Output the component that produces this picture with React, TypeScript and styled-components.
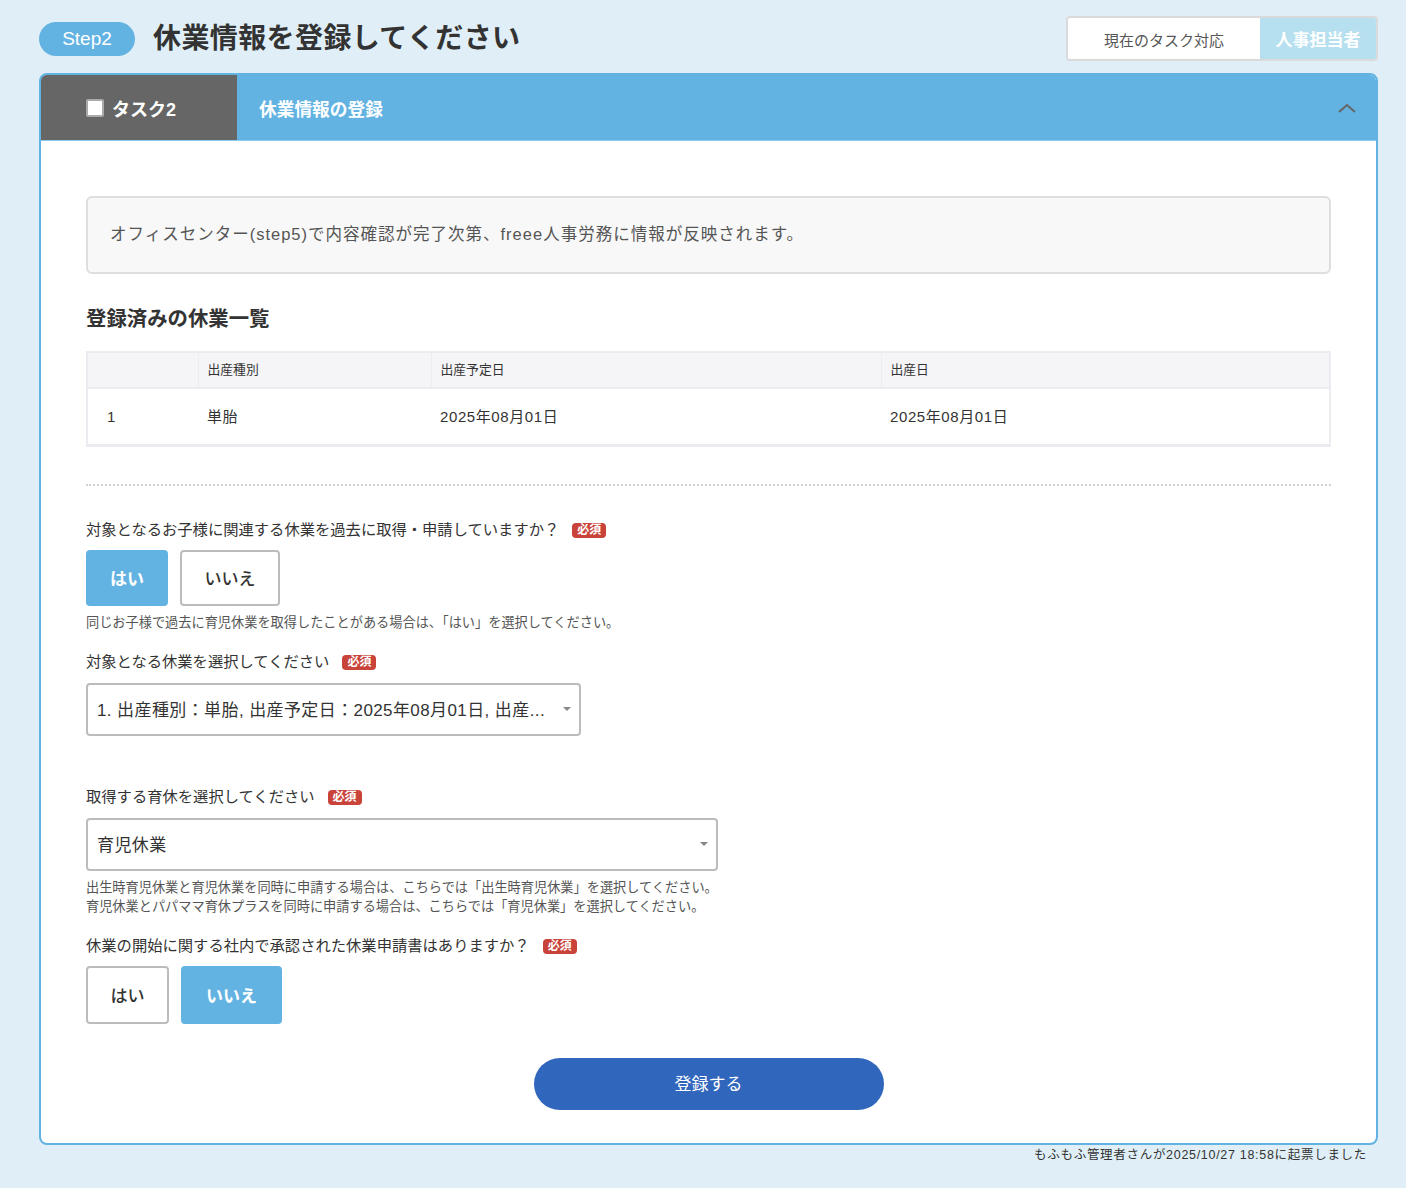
import styled, { createGlobalStyle } from "styled-components";

const GlobalStyle = createGlobalStyle`
  body {
    margin: 0;
    background: #e0eff7;
    font-family: "Liberation Sans", "Noto Sans CJK JP", sans-serif;
    color: #333;
  }
`;

const Page = styled.div`
  padding: 16px 28px 30px 39px;
`;

const TopBar = styled.header`
  height: 45px;
  display: flex;
  align-items: center;
  justify-content: space-between;
`;

const TitleGroup = styled.div`
  display: flex;
  align-items: center;
  gap: 18px;
  margin-top: 1px;
`;

const StepPill = styled.span`
  width: 96px;
  height: 34px;
  border-radius: 17px;
  background: #63b3e2;
  color: #fff;
  font-size: 19px;
  display: flex;
  align-items: center;
  justify-content: center;
`;

const Title = styled.h1`
  margin: 0;
  font-size: 28px;
  font-weight: 700;
  line-height: 40px;
  color: #333;
  letter-spacing: 0.4px;
`;

const RoleBox = styled.div`
  display: flex;
  height: 41px;
  border: 2px solid #dadada;
  border-radius: 4px;
  overflow: hidden;
`;

const RoleLabel = styled.div`
  width: 192px;
  background: #fff;
  color: #555;
  font-size: 15px;
  display: flex;
  align-items: center;
  justify-content: center;
  padding-top: 2px;
`;

const RoleValue = styled.div`
  width: 116px;
  background: #b6dff0;
  color: #fff;
  font-size: 17px;
  font-weight: 700;
  display: flex;
  align-items: center;
  justify-content: center;
`;

const Card = styled.section`
  margin-top: 12px;
  border: 2px solid #63b3e2;
  border-radius: 8px;
  background: #fff;
  overflow: hidden;
`;

const CardHeader = styled.div`
  display: flex;
  height: 65px;
  background: #63b3e2;
  border-bottom: 1px solid #8ccaee;
`;

const TaskTab = styled.div`
  width: 151px;
  padding-left: 45px;
  background: #666;
  color: #fff;
  display: flex;
  align-items: center;
  gap: 8px;
  font-size: 18px;
  font-weight: 700;
`;

const CheckBox = styled.span`
  width: 14px;
  height: 14px;
  background: #fff;
  border: 2px solid #aaa;
  border-radius: 2px;
`;

const HeaderTitle = styled.div`
  flex: 1;
  display: flex;
  align-items: center;
  justify-content: space-between;
  padding: 0 20px 0 22px;
  color: #fff;
  font-size: 17.7px;
  font-weight: 700;
`;

const CardBody = styled.div`
  padding: 55px 45px 33px;
`;

const InfoBox = styled.div`
  height: 70px;
  box-sizing: content-box;
  border: 2px solid #dedede;
  border-radius: 6px;
  background: #f8f8f8;
  display: flex;
  align-items: center;
  padding: 0 0 4px 22px;
  font-size: 16.5px;
  letter-spacing: 1px;
  color: #555;
`;

const SectionHeading = styled.h2`
  margin: 31px 0 18px;
  font-size: 20.4px;
  line-height: 28px;
  font-weight: 700;
  color: #333;
`;

const Table = styled.table`
  width: 100%;
  table-layout: fixed;
  border-collapse: collapse;
  border: 2px solid #ebebf0;
  border-bottom-width: 3px;
`;

const Th = styled.th<{ $w?: number }>`
  box-sizing: border-box;
  width: ${(p) => (p.$w ? `${p.$w}px` : "auto")};
  height: 36px;
  background: #f5f4f6;
  text-align: left;
  font-size: 12.8px;
  line-height: 16px;
  font-weight: 400;
  color: #333;
  padding: 0 0 0 9px;
  border-left: 1px solid #ececf1;
  border-bottom: 2px solid #ebebf0;
  &:first-child {
    padding-left: 19px;
    border-left: none;
  }
`;

const Td = styled.td`
  height: 55px;
  font-size: 15px;
  line-height: 20px;
  letter-spacing: 0.6px;
  color: #333;
  padding: 0 0 0 9px;
  &:first-child {
    padding-left: 19px;
  }
`;

const Dotted = styled.hr`
  margin: 37px 0 0;
  border: none;
  border-top: 2px dotted #d2d2d2;
`;

const Field = styled.div<{ $top: number }>`
  margin-top: ${(p) => p.$top}px;
`;

const Label = styled.div`
  display: flex;
  align-items: center;
  gap: 13px;
  font-size: 15.3px;
  line-height: 22px;
  color: #333;
`;

const Required = styled.span`
  background: #c9433b;
  color: #fff;
  font-size: 12px;
  font-weight: 700;
  line-height: 15px;
  padding: 0 5px;
  border-radius: 4px;
`;

const ChoiceRow = styled.div<{ $h: number }>`
  display: flex;
  gap: 12px;
  margin-top: 9px;
  height: ${(p) => p.$h}px;
`;

const Choice = styled.button<{ $active?: boolean; $w: number }>`
  width: ${(p) => p.$w}px;
  height: 100%;
  border-radius: 4px;
  font-family: inherit;
  font-size: 17px;
  font-weight: ${(p) => (p.$active ? 700 : 500)};
  color: ${(p) => (p.$active ? "#fff" : "#333")};
  background: ${(p) => (p.$active ? "#63b3e2" : "#fff")};
  border: 2px solid ${(p) => (p.$active ? "#63b3e2" : "#bcbcbc")};
  padding: 0 0 2px;
  cursor: pointer;
`;

const Help = styled.p`
  margin: 7px 0 0;
  font-size: 13.2px;
  line-height: 19px;
  color: #555;
`;

const Select = styled.div<{ $w: number }>`
  margin-top: 10px;
  width: ${(p) => p.$w}px;
  height: 53px;
  box-sizing: border-box;
  border: 2px solid #bcbcbc;
  border-radius: 4px;
  display: flex;
  align-items: center;
  justify-content: space-between;
  padding: 0 8px 2px 9px;
  font-size: 17px;
  letter-spacing: 0.4px;
  color: #333;
`;

const Arrow = styled.span`
  width: 0;
  height: 0;
  border-left: 4px solid transparent;
  border-right: 4px solid transparent;
  border-top: 4px solid #888;
`;

const SubmitRow = styled.div`
  display: flex;
  justify-content: center;
  margin-top: 34px;
`;

const Submit = styled.button`
  width: 350px;
  height: 52px;
  border: none;
  border-radius: 26px;
  background: #3166bd;
  color: #fff;
  font-family: inherit;
  font-size: 17px;
  padding: 0 0 4px;
  cursor: pointer;
`;

const Footer = styled.div`
  text-align: right;
  padding-right: 11px;
  margin-top: 1px;
  font-size: 12.5px;
  line-height: 18px;
  letter-spacing: 0.7px;
  color: #333;
`;

export default function App() {
  return (
    <>
      <GlobalStyle />
      <Page>
        <TopBar>
          <TitleGroup>
            <StepPill>Step2</StepPill>
            <Title>休業情報を登録してください</Title>
          </TitleGroup>
          <RoleBox>
            <RoleLabel>現在のタスク対応</RoleLabel>
            <RoleValue>人事担当者</RoleValue>
          </RoleBox>
        </TopBar>

        <Card>
          <CardHeader>
            <TaskTab>
              <CheckBox />
              タスク2
            </TaskTab>
            <HeaderTitle>
              休業情報の登録
              <svg width="18" height="10" viewBox="0 0 18 10">
                <polyline points="1,9 9,2 17,9" fill="none" stroke="#666" strokeWidth="2" />
              </svg>
            </HeaderTitle>
          </CardHeader>

          <CardBody>
            <InfoBox>
              オフィスセンター(step5)で内容確認が完了次第、freee人事労務に情報が反映されます。
            </InfoBox>

            <SectionHeading>登録済みの休業一覧</SectionHeading>
            <Table>
              <thead>
                <tr>
                  <Th $w={111}></Th>
                  <Th $w={233}>出産種別</Th>
                  <Th $w={450}>出産予定日</Th>
                  <Th>出産日</Th>
                </tr>
              </thead>
              <tbody>
                <tr>
                  <Td>1</Td>
                  <Td>単胎</Td>
                  <Td>2025年08月01日</Td>
                  <Td>2025年08月01日</Td>
                </tr>
              </tbody>
            </Table>

            <Dotted />

            <Field $top={33}>
              <Label>
                対象となるお子様に関連する休業を過去に取得・申請していますか？
                <Required>必須</Required>
              </Label>
              <ChoiceRow $h={56}>
                <Choice $active $w={82}>はい</Choice>
                <Choice $w={100}>いいえ</Choice>
              </ChoiceRow>
              <Help>同じお子様で過去に育児休業を取得したことがある場合は、「はい」を選択してください。</Help>
            </Field>

            <Field $top={19}>
              <Label>
                対象となる休業を選択してください
                <Required>必須</Required>
              </Label>
              <Select $w={495}>
                1. 出産種別：単胎, 出産予定日：2025年08月01日, 出産...
                <Arrow />
              </Select>
            </Field>

            <Field $top={50}>
              <Label>
                取得する育休を選択してください
                <Required>必須</Required>
              </Label>
              <Select $w={632}>
                育児休業
                <Arrow />
              </Select>
              <Help>
                出生時育児休業と育児休業を同時に申請する場合は、こちらでは「出生時育児休業」を選択してください。
                <br />
                育児休業とパパママ育休プラスを同時に申請する場合は、こちらでは「育児休業」を選択してください。
              </Help>
            </Field>

            <Field $top={19}>
              <Label>
                休業の開始に関する社内で承認された休業申請書はありますか？
                <Required>必須</Required>
              </Label>
              <ChoiceRow $h={58}>
                <Choice $w={83}>はい</Choice>
                <Choice $active $w={101}>いいえ</Choice>
              </ChoiceRow>
            </Field>

            <SubmitRow>
              <Submit>登録する</Submit>
            </SubmitRow>
          </CardBody>
        </Card>
        <Footer>もふもふ管理者さんが2025/10/27 18:58に起票しました</Footer>
      </Page>
    </>
  );
}
